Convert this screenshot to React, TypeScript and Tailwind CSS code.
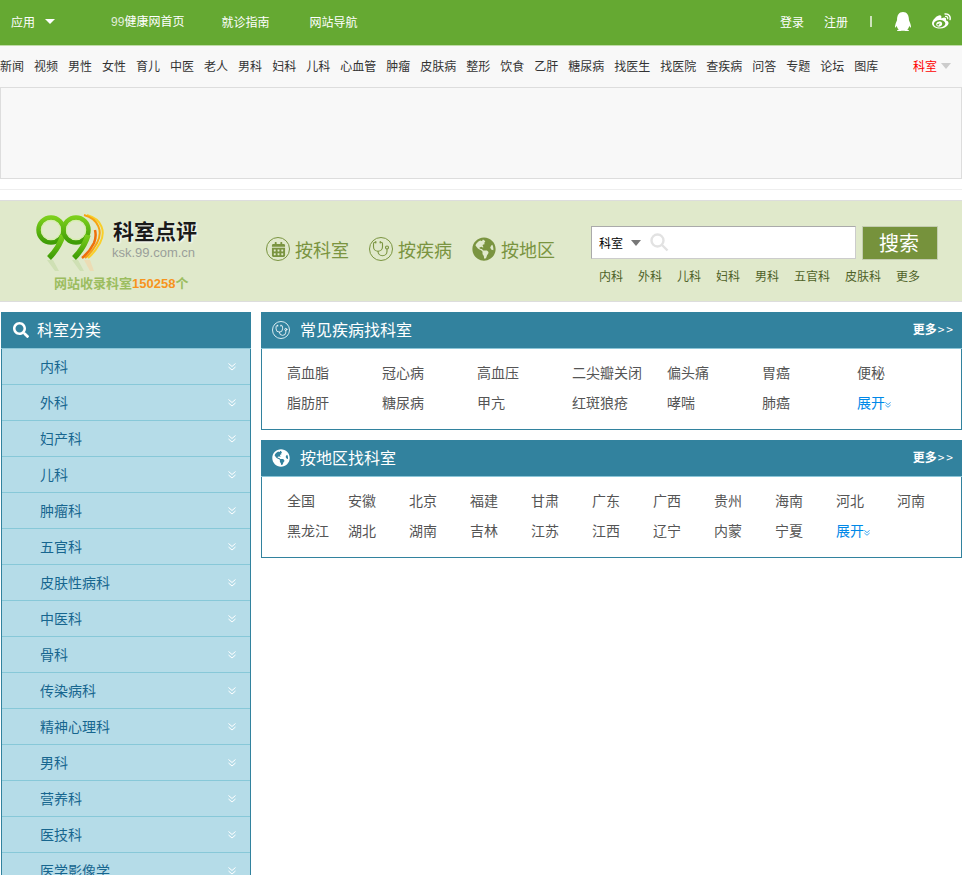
// App.tsx
import { FaQq, FaWeibo, FaSearch, FaGlobeAmericas, FaCalendarAlt } from "react-icons/fa";
import { Stethoscope } from "lucide-react";

const navLinks = ["新闻","视频","男性","女性","育儿","中医","老人","男科","妇科","儿科","心血管","肿瘤","皮肤病","整形","饮食","乙肝","糖尿病","找医生","找医院","查疾病","问答","专题","论坛","图库"];
const searchLinks = ["内科","外科","儿科","妇科","男科","五官科","皮肤科","更多"];
const sideLinks = ["内科","外科","妇产科","儿科","肿瘤科","五官科","皮肤性病科","中医科","骨科","传染病科","精神心理科","男科","营养科","医技科","医学影像学"];
const diseases = ["高血脂","冠心病","高血压","二尖瓣关闭","偏头痛","胃癌","便秘","脂肪肝","糖尿病","甲亢","红斑狼疮","哮喘","肺癌"];
const areas = ["全国","安徽","北京","福建","甘肃","广东","广西","贵州","海南","河北","河南","黑龙江","湖北","湖南","吉林","江苏","江西","辽宁","内蒙","宁夏"];

const DoubleChevron = ({ className }: { className: string }) => (
  <svg viewBox="0 0 8 8" fill="none" stroke="currentColor" strokeWidth="1" className={className}>
    <path d="M0.5 0.5 L4 3.5 L7.5 0.5 M0.5 4 L4 7 L7.5 4" />
  </svg>
);

const Logo = () => (
  <svg width="70" height="58" viewBox="0 0 70 58" fill="none">
    <defs>
      <linearGradient id="green99" x1="0" y1="0" x2="0" y2="1">
        <stop offset="0" stopColor="#7ccf1c" />
        <stop offset="1" stopColor="#3f9c06" />
      </linearGradient>
    </defs>
    <path d="M53 1 C68 5 72 18 66 29 C62 36 58 41 54 44" stroke="#f9cf2a" strokeWidth="2" />
    <path d="M50 1 C65 5 69 18 63 29 C59 36 55 41 51 44" stroke="#f6a312" strokeWidth="2" />
    <path d="M48 44 C53 40 57 35 60 29 C62 24 62 20 61 16" stroke="#ee6f0c" strokeWidth="2.5" />
    <g stroke="url(#green99)">
      <circle cx="17" cy="16" r="12.5" strokeWidth="4.5" />
      <path d="M29 21 C26 31 21 38 15 44" strokeWidth="5.5" />
      <circle cx="42" cy="16" r="12.5" strokeWidth="4.5" />
      <path d="M54 21 C51 31 46 38 40 44" strokeWidth="5.5" />
    </g>
    <circle cx="17" cy="16" r="9.5" stroke="#d4f0a4" strokeWidth="1" />
    <circle cx="42" cy="16" r="9.5" stroke="#d4f0a4" strokeWidth="1" />
    <path d="M13 46 L19 46 L25 57 L21 57 Z M38 46 L44 46 L50 57 L46 57 Z" fill="#cfe0b4" />
    <path d="M50 46 L56 46 L60 57 L56 57 Z" fill="#ecdcb4" />
  </svg>
);

const Panel = ({ icon, title, cols, items, rowClass }: { icon: React.ReactNode; title: string; cols: string; items: string[]; rowClass: string }) => (
  <section className="border border-[#32829e] border-t-0 h-[118px]">
    <div className="flex items-center h-[37px] -mx-px bg-[#32829e] border-b border-[#8cc6d8] text-white">
      <span className="w-[18px] ml-[11px] flex justify-center">{icon}</span>
      <h2 className="ml-[10px] mb-[2px] text-base leading-[34px]">{title}</h2>
      <a className="ml-auto mr-[7px] mb-[2px] flex items-center text-xs font-bold leading-[20px]">更多<span className="ml-px font-normal tracking-[2px]">&gt;&gt;</span></a>
    </div>
    <div className={`grid ${cols} ${rowClass} pt-[8px] text-sm leading-[30px] text-[#555]`}>
      {items.map((t) => <a key={t} className="whitespace-nowrap">{t}</a>)}
      <a className="flex items-center text-[#0088e8]">展开<DoubleChevron className="w-[6px] h-[6px] mt-[5px]" /></a>
    </div>
  </section>
);

export default function App() {
  return (
    <div className="h-[875px] overflow-hidden bg-white font-['Noto_Sans_CJK_SC',sans-serif]">
      <header className="flex items-center h-[46px] pb-[2px] bg-[#65a932] border-b border-[#c0dba8] text-xs text-white">
        <a className="ml-[11px]">应用</a>
        <span className="ml-[10px] border-x-[5px] border-t-[5px] border-x-transparent border-t-white" />
        <a className="ml-[56px]"><span className="font-['Liberation_Sans',sans-serif] opacity-80">99</span>健康网首页</a>
        <a className="ml-[37px]">就诊指南</a>
        <a className="ml-[40px]">网站导航</a>
        <a className="ml-auto">登录</a>
        <a className="ml-[20px]">注册</a>
        <span className="ml-[22px] w-[2px] h-[11px] bg-[#cfe3bd]" />
        <FaQq className="ml-[22px] w-[18px] h-[19px]" />
        <FaWeibo className="ml-[19px] mr-[10px] w-[21px] h-[19px]" />
      </header>

      <nav className="flex items-center h-[41px] pb-[2px] bg-[#f8f8f8] text-xs text-[#333]">
        <div className="flex gap-[10px]">
          {navLinks.map((t) => <a key={t} className="whitespace-nowrap">{t}</a>)}
        </div>
        <a className="ml-auto text-[#f00]">科室</a>
        <span className="ml-[4px] mr-[11px] border-x-[5px] border-t-[6px] border-x-transparent border-t-[#ccc]" />
      </nav>

      <div className="h-[92px] bg-[#f8f8f8] border border-[#ddd]" />
      <div className="h-[11px] border-b border-[#eee]" />
      <div className="h-[10px]" />

      <div className="flex h-[102px] bg-[#e0e9cb] border-y border-[#ddd]">
        <div className="w-[266px] shrink-0 pl-[34px] pt-[13px]">
          <div className="flex">
            <Logo />
            <div className="ml-[9px] pt-[1px]">
              <div className="text-[21px] leading-[30px] font-bold text-[#1a1a1a] [text-shadow:1px_1px_2px_#fff]">科室点评</div>
              <div className="-ml-px font-['Liberation_Sans',sans-serif] text-[13px] leading-[15px] text-[#9a9f9a]">ksk.99.com.cn</div>
            </div>
          </div>
          <div className="ml-[20px] mt-[1px] text-[13px] leading-[20px] font-bold text-[#9cbd5f]">网站收录科室<span className="text-[#f7941d] font-['Liberation_Sans',sans-serif]">150258</span>个</div>
        </div>

        <div className="flex items-center h-[96px] text-lg text-[#7a9440]">
          <span className="flex items-center justify-center w-[24px] h-[24px] rounded-full border border-[#7a9440]"><FaCalendarAlt className="w-[15px] h-[15px]" /></span>
          <a className="ml-[5px]">按科室</a>
          <span className="ml-[20px] flex items-center justify-center w-[24px] h-[24px] rounded-full border border-[#7a9440]"><Stethoscope className="w-[18px] h-[18px]" strokeWidth={1.5} /></span>
          <a className="ml-[5px]">按疾病</a>
          <span className="ml-[20px] flex items-center justify-center w-[24px] h-[24px] rounded-full"><FaGlobeAmericas className="w-[24px] h-[24px]" /></span>
          <a className="ml-[5px]">按地区</a>
        </div>

        <div className="ml-[36px] pt-[25px]">
          <div className="flex">
            <div className="flex items-center w-[265px] h-[33px] bg-white border border-[#aaa] border-r-[#ccc] border-b-[#ccc] text-xs text-black">
              <span className="ml-[7px]">科室</span>
              <span className="ml-[8px] border-x-[5px] border-t-[6px] border-x-transparent border-t-[#777]" />
              <svg className="ml-[9px]" width="19" height="19" viewBox="0 0 19 19" fill="none" stroke="#e2e2e2" strokeWidth="2.4">
                <circle cx="7.5" cy="7.5" r="6" />
                <path d="M12 12 L17.5 17.5" />
              </svg>
            </div>
            <button className="ml-[6px] w-[76px] h-[34px] pr-[2px] bg-[#76923c] border border-[#c4cdb0] text-xl leading-none text-white">搜索</button>
          </div>
          <div className="flex gap-[15px] ml-[8px] mt-[6px] text-xs leading-[20px] text-[#4f6228]">
            {searchLinks.map((t) => <a key={t}>{t}</a>)}
          </div>
        </div>
      </div>

      <main className="flex items-start mt-[10px]">
        <aside className="ml-px w-[250px] shrink-0 border-x border-[#32829e]">
          <div className="flex items-center h-[37px] -mx-px bg-[#32829e] border-b border-[#8cc6d8] text-white">
            <FaSearch className="ml-[12px] w-[16px] h-[16px]" />
            <h2 className="ml-[8px] mb-[2px] text-base leading-[34px]">科室分类</h2>
          </div>
          {sideLinks.map((t) => (
            <a key={t} className="flex items-center h-[36px] pl-[38px] pr-[14px] bg-[#b5dce8] border-b border-[#87c8d8] text-sm text-[#17668f]">
              <span className="mb-[2px]">{t}</span>
              <DoubleChevron className="ml-auto w-[8px] h-[8px] text-white" />
            </a>
          ))}
        </aside>

        <div className="ml-[10px] flex-1 flex flex-col gap-[10px]">
          <Panel
            icon={<span className="flex items-center justify-center w-[18px] h-[18px] rounded-full border border-[#d8ecf2]"><Stethoscope className="w-[13px] h-[13px]" strokeWidth={1.5} /></span>}
            title="常见疾病找科室"
            cols="grid-cols-[repeat(7,95px)]"
            rowClass="pl-[25px]"
            items={diseases}
          />
          <Panel
            icon={<FaGlobeAmericas className="w-[18px] h-[18px]" />}
            title="按地区找科室"
            cols="grid-cols-[repeat(11,61px)]"
            rowClass="pl-[25px]"
            items={areas}
          />
        </div>
      </main>
    </div>
  );
}
